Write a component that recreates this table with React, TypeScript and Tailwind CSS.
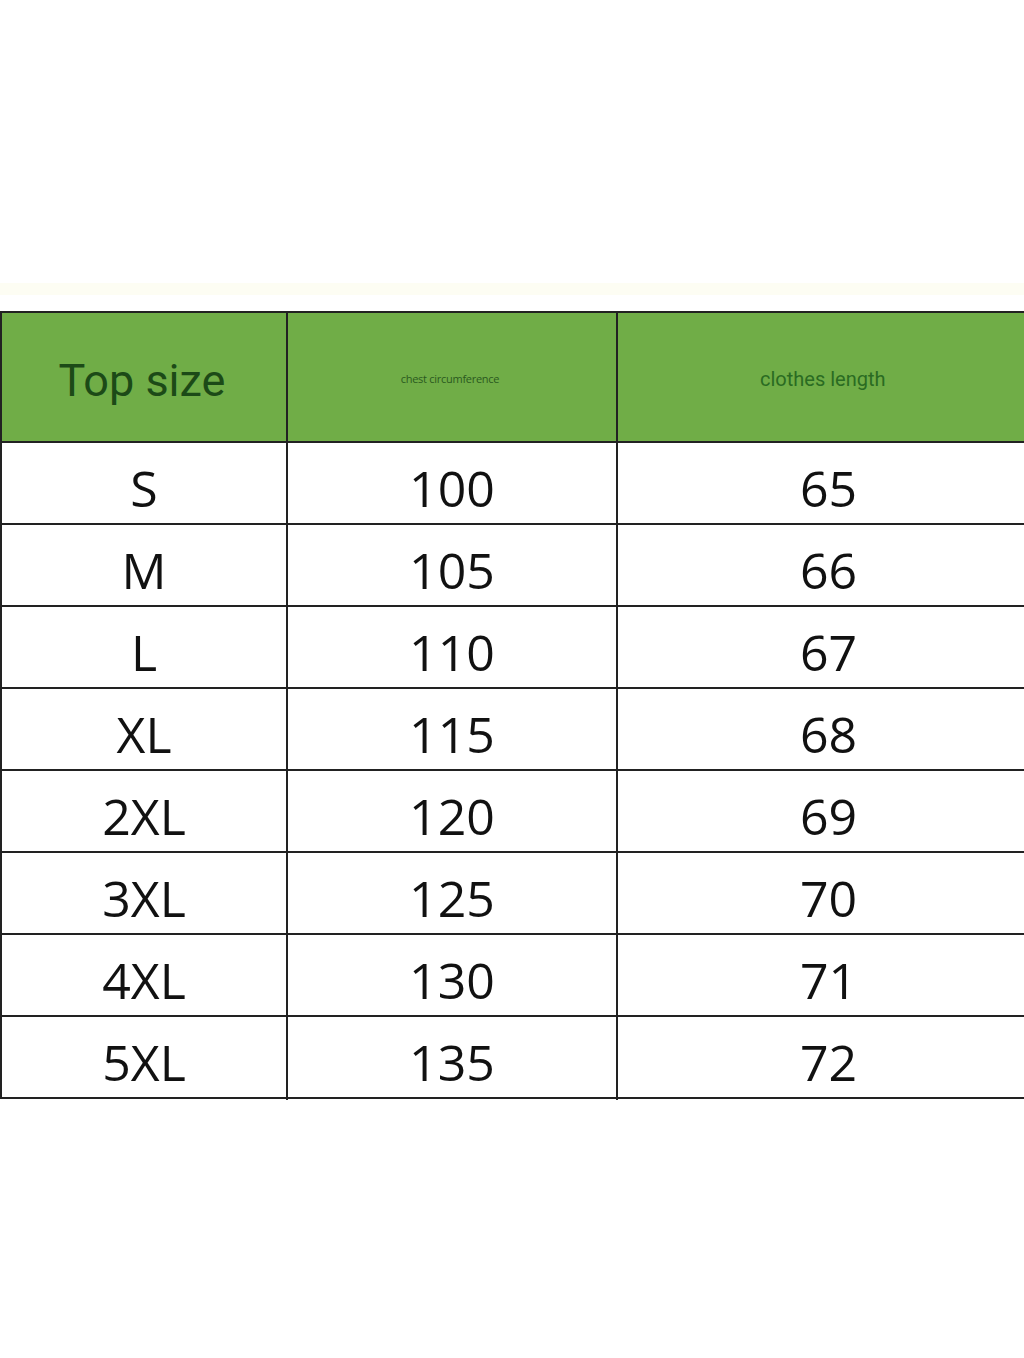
import React from 'react'

const rows: [string, string, string][] = [
  ['S', '100', '65'],
  ['M', '105', '66'],
  ['L', '110', '67'],
  ['XL', '115', '68'],
  ['2XL', '120', '69'],
  ['3XL', '125', '70'],
  ['4XL', '130', '71'],
  ['5XL', '135', '72'],
]

export default function App() {
  return (
    <div className="w-[1024px] h-[1358px] bg-white overflow-hidden" style={{ fontFamily: '"Open Sans", sans-serif' }}>
      <div className="h-[283px]" />
      <div className="h-[12px] bg-[#fdfdf3]" />
      <div className="h-[16px]" />
      <div className="w-[1060px] border-t-2 border-l-2 border-[#222]">
        <div className="grid grid-cols-[286px_330px_444px] h-[130px] bg-[#70ad47] border-b-2 border-[#222]">
          <div className="flex items-center justify-center border-r-2 border-[#222] text-[45px] text-[#1c4a17] pt-2 pr-1" style={{ fontFamily: 'Roboto, sans-serif' }}>
            Top size
          </div>
          <div className="flex items-center justify-center border-r-2 border-[#222] text-[11px] text-[#2b5a20] pr-1 pt-1 tracking-tight">
            chest circumference
          </div>
          <div className="flex items-center justify-start pl-[142px] text-[20px] text-[#2a6b22] pt-1" style={{ fontFamily: 'Roboto, sans-serif' }}>
            clothes length
          </div>
        </div>
        {rows.map(([size, chest, len]) => (
          <div key={size} className="grid grid-cols-[286px_330px_444px] h-[82px] border-b-2 border-[#222] text-[50px] text-[#111]">
            <div className="flex items-center justify-center border-r-2 border-[#222] pt-2">{size}</div>
            <div className="flex items-center justify-center border-r-2 border-[#222] pt-2">{chest}</div>
            <div className="flex items-center justify-start pl-[182px] pt-2">{len}</div>
          </div>
        ))}
      </div>
    </div>
  )
}
